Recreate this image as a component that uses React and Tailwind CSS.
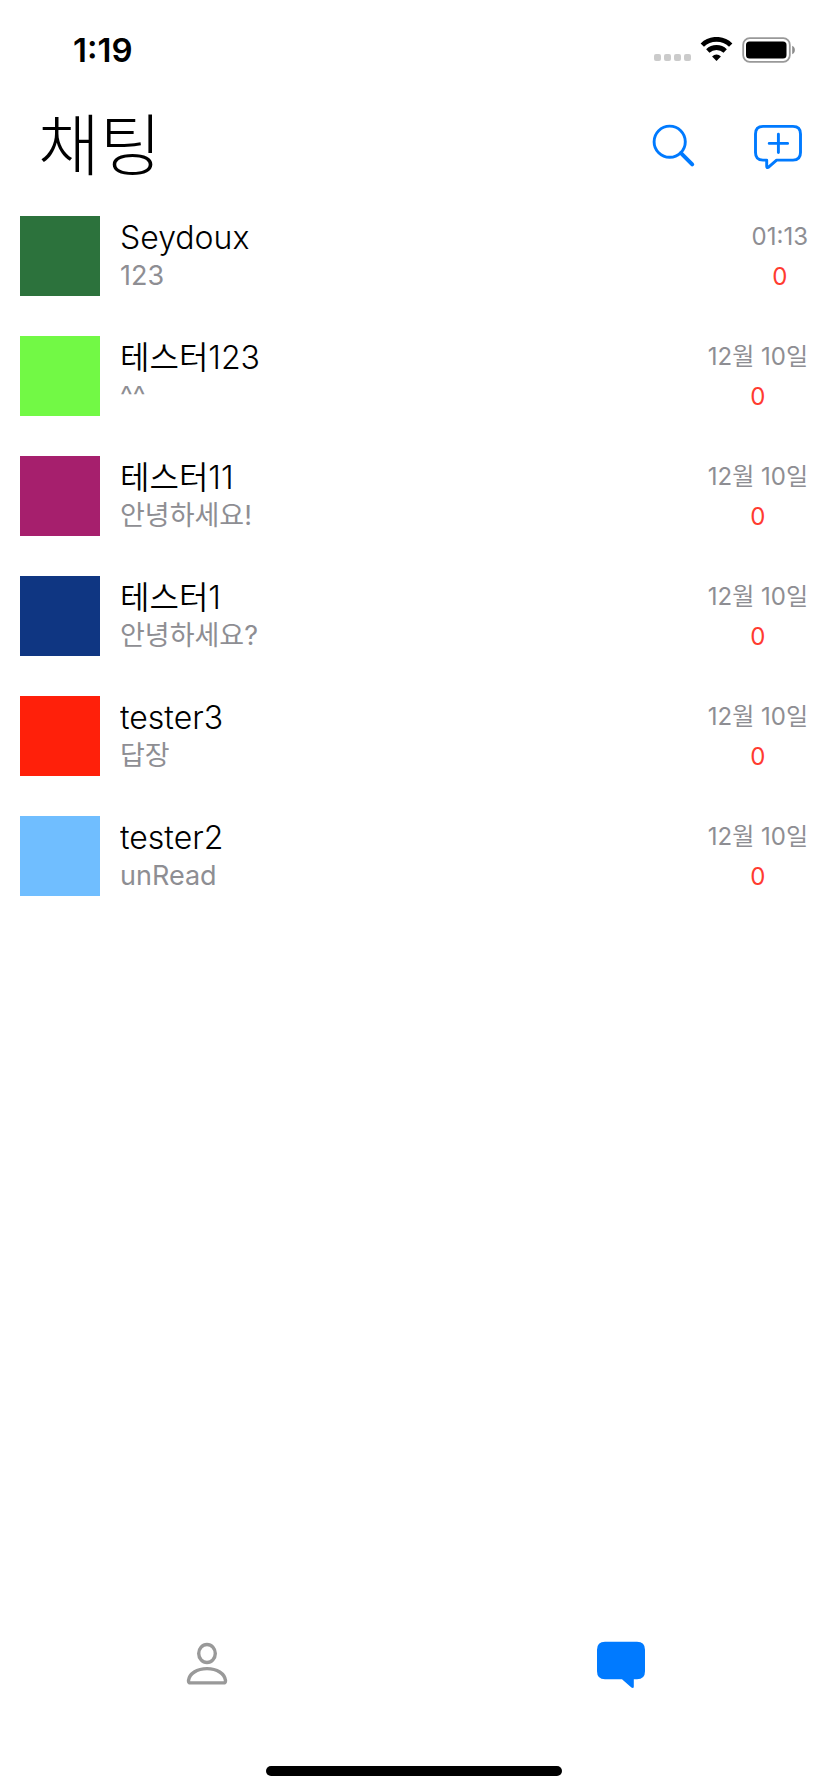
const chats = [
  { name: "Seydoux", message: "123", time: "01:13", unread: 0, color: "bg-[#2c723c]" },
  { name: "테스터123", message: "^^", time: "12월 10일", unread: 0, color: "bg-[#72f945]" },
  { name: "테스터11", message: "안녕하세요!", time: "12월 10일", unread: 0, color: "bg-[#a61f6d]" },
  { name: "테스터1", message: "안녕하세요?", time: "12월 10일", unread: 0, color: "bg-[#0f3682]" },
  { name: "tester3", message: "답장", time: "12월 10일", unread: 0, color: "bg-[#ff200a]" },
  { name: "tester2", message: "unRead", time: "12월 10일", unread: 0, color: "bg-[#70beff]" },
];

function StatusBar() {
  return (
    <div className="flex h-24 items-center justify-between pl-[73px] pr-8 pt-1">
      <span className="text-[33px] leading-10 font-semibold">1:19</span>
      <svg className="h-[26px] w-[142px]" viewBox="0 0 142 26" aria-hidden="true">
        <g fill="#cbcbcb">
          <rect x="0" y="17" width="7" height="7" rx="2" />
          <rect x="10" y="17" width="7" height="7" rx="2" />
          <rect x="20" y="17" width="7" height="7" rx="2" />
          <rect x="30" y="17" width="7" height="7" rx="2" />
        </g>
        <g fill="none" stroke="#000" strokeWidth="4.8">
          <path d="M48.3 8.1a20.3 20.3 0 0 1 28.4 0" />
          <path d="M53.8 14a12.6 12.6 0 0 1 17.4 0" />
        </g>
        <path d="M58.1 19.4a6.2 6.2 0 0 1 8.8 0L62.5 23.900z" />
        <rect x="89.200" y="1.200" width="46.600" height="23.600" rx="6.500" fill="none" stroke="#999" strokeWidth="1.800" />
        <rect x="92" y="4.500" width="40.500" height="17" rx="3.500" />
        <path d="M138.200 8.800c3.600 1.500 3.600 6.900 0 8.400z" fill="#8c8c8c" />
      </svg>
    </div>
  );
}

function Header() {
  return (
    <header className="flex h-[104px] items-center justify-between pb-1 pl-[38px] pr-[25px]">
      <h1 className="text-[67px] leading-[96px] font-light">채팅</h1>
      <div className="flex items-center gap-14">
        <button type="button" aria-label="검색">
          <svg className="h-[46px] w-[46px]" viewBox="0 0 46 46" fill="none" stroke="#007aff" strokeLinecap="round">
            <circle cx="18.700" cy="18.700" r="15.600" strokeWidth="2.900" />
            <path d="M30 30.200L41.200 41.400" strokeWidth="4" />
          </svg>
        </button>
        <button type="button" aria-label="새 채팅">
          <svg className="h-[46px] w-[50px]" viewBox="0 0 50 46" fill="none" stroke="#007aff" strokeWidth="2.900" strokeLinecap="round" strokeLinejoin="round">
            <path d="M10 3.400h30q7.500 0 7.500 7.500v18.700q0 7.500-7.500 7.500H23.600l-8.300 7.200q-1.600 1-1.600-1v-6.200H10q-7.500 0-7.500-7.500V10.900q0-7.500 7.500-7.500z" />
            <path d="M25.400 11.200v18.400M16.200 20.400h18.400" />
          </svg>
        </button>
      </div>
    </header>
  );
}

function ChatRow({ chat }) {
  return (
    <li>
      <a href="#chat" className="flex h-30 items-start px-5 pt-4">
        <span className={`size-20 shrink-0 ${chat.color}`} />
        <span className="flex min-w-0 flex-1 flex-col pl-5">
          <span className="truncate text-[32px] leading-[44px] font-[350]">{chat.name}</span>
          <span className="truncate text-[27px] leading-8 text-[#8e8e93]">{chat.message}</span>
        </span>
        <span className="flex flex-col items-center pt-px text-2xl leading-10">
          <span className="text-[#8e8e93]">{chat.time}</span>
          <span className="text-[#ff3b30]">{chat.unread}</span>
        </span>
      </a>
    </li>
  );
}

function TabBar() {
  return (
    <nav className="grid grid-cols-2 pb-[76px]">
      <button type="button" aria-label="친구" className="flex justify-center">
        <svg className="h-[50px] w-[50px]" viewBox="0 0 50 50" fill="none" stroke="#999" strokeWidth="3.400">
          <ellipse cx="25" cy="13.500" rx="8.300" ry="9" />
          <path d="M8.500 42.900h33q2.100 0 2-2.400C42.700 33.600 35 28.600 25 28.600S7.300 33.600 6.500 40.500q-.1 2.400 2 2.400z" />
        </svg>
      </button>
      <button type="button" aria-label="채팅" aria-current="page" className="flex justify-center">
        <svg className="h-[50px] w-[50px]" viewBox="0 0 50 50" fill="#007aff">
          <path d="M9 1.800h32q8 0 8 8v21.400q0 8-8 8h-3.200v7.200q0 2.400-2.400 1.200L26 39.200H9q-8 0-8-8V9.800q0-8 8-8z" />
        </svg>
      </button>
    </nav>
  );
}

export default function App() {
  return (
    <div className="flex min-h-screen flex-col bg-white font-['Inter','Noto_Sans_CJK_KR',sans-serif] text-black">
      <StatusBar />
      <Header />
      <main className="flex-1">
        <ul>
          {chats.map((chat) => (
            <ChatRow key={chat.name} chat={chat} />
          ))}
        </ul>
      </main>
      <TabBar />
      <div className="mx-auto mb-4 h-2.5 w-[296px] rounded-full bg-black" />
    </div>
  );
}
